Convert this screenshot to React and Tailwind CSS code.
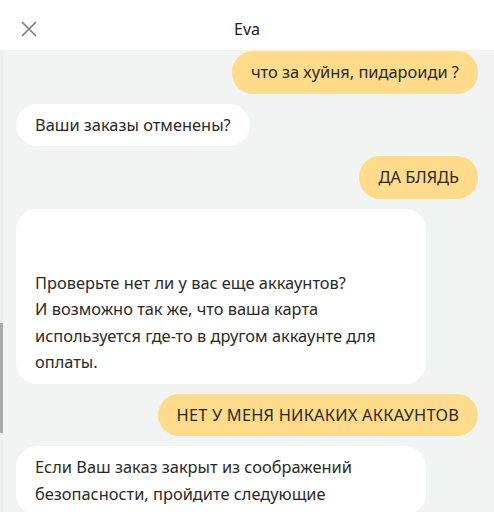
import React from "react";

const font = { fontFamily: '"Noto Sans", "Open Sans", sans-serif' };

function User({ children, extra = "" }) {
  return (
    <div className="flex justify-end">
      <div className={"bg-[#ffdb8b] text-[#2b2a29] rounded-[21px] px-[19px] py-2 text-[16.4px] leading-[26.5px] whitespace-nowrap " + extra}>
        {children}
      </div>
    </div>
  );
}

function Bot({ children, wide }) {
  return (
    <div className="flex justify-start">
      <div
        className={
          "bg-white text-[#2b2a29] rounded-[21px] px-[19px] py-2 text-[16.4px] leading-[26.5px] whitespace-nowrap " +
          (wide ? "w-[410px]" : "")
        }
      >
        {children}
      </div>
    </div>
  );
}

export default function App() {
  return (
    <div className="relative w-[494px] h-[517px] overflow-hidden bg-[#f2f3f3] flex flex-col" style={font}>
      <div className="h-[50px] bg-white flex items-center relative shrink-0">
        <div className="absolute left-[21px] top-[21px] w-[16px] h-[16px]">
          <svg width="16" height="16" viewBox="0 0 16 16" fill="none">
            <path d="M1 1 L15 15 M15 1 L1 15" stroke="#7a7a7a" strokeWidth="1.6" />
          </svg>
        </div>
        <div className="flex-1 text-center text-[16px] text-[#21201f] pt-[7px]">Eva</div>
      </div>
      <div className="flex-1 flex flex-col gap-[10px] px-4 pt-px">
        <User>что за хуйня, пидароиди ?</User>
        <Bot>Ваши заказы отменены?</Bot>
        <User>ДА БЛЯДЬ</User>
        <Bot wide>
          <div className="h-[53px]"></div>
          <div>Проверьте нет ли у вас еще аккаунтов?</div>
          <div>И возможно так же, что ваша карта</div>
          <div>используется где-то в другом аккаунте для</div>
          <div>оплаты.</div>
        </Bot>
        <User extra="tracking-[0.2px]">НЕТ У МЕНЯ НИКАКИХ АККАУНТОВ</User>
        <Bot wide>
          <div>Если Ваш заказ закрыт из соображений</div>
          <div>безопасности, пройдите следующие</div>
        </Bot>
      </div>
      <div className="absolute left-0 right-0 bottom-0 h-[5px] bg-white"></div>
      <div className="absolute left-0 top-[50px] bottom-[5px] w-[3px] bg-[#eeeeee]"></div>
      <div className="absolute left-0 top-[323px] h-[110px] w-[3px] bg-[#a9a9a9]"></div>
    </div>
  );
}
